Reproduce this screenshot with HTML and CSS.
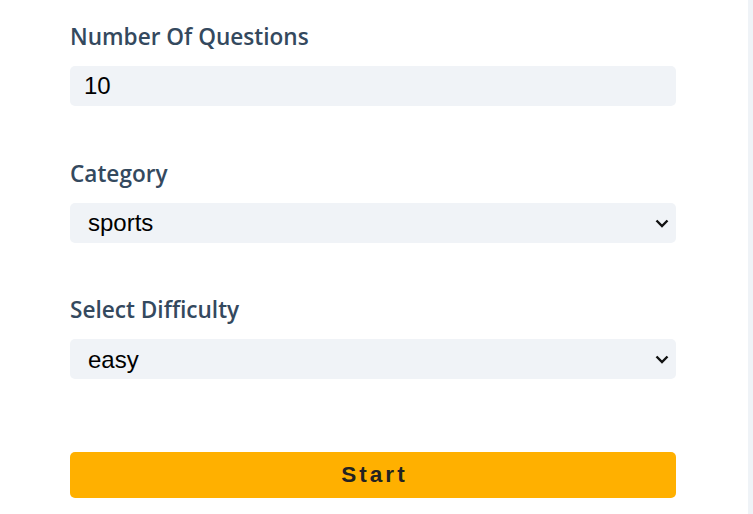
FILE: index.html
```html
<!DOCTYPE html>
<html lang="en">
<head>
<meta charset="utf-8">
<title>Quiz Setup</title>
<link rel="stylesheet" href="styles.css">
</head>
<body>
<div class="page">
  <main class="panel">
    <form class="form">
      <div class="group">
        <label class="label" for="num">Number Of Questions</label>
        <input class="field" id="num" type="number" value="10">
      </div>
      <div class="group">
        <label class="label" for="cat">Category</label>
        <div class="select-wrap">
          <select class="field select" id="cat">
            <option>sports</option>
          </select>
          <svg class="chev" width="14" height="9" viewBox="0 0 14 9"><path d="M1.5 1.5 L7 7 L12.5 1.5" fill="none" stroke="#111" stroke-width="2.4"/></svg>
        </div>
      </div>
      <div class="group">
        <label class="label" for="diff">Select Difficulty</label>
        <div class="select-wrap">
          <select class="field select" id="diff">
            <option>easy</option>
          </select>
          <svg class="chev" width="14" height="9" viewBox="0 0 14 9"><path d="M1.5 1.5 L7 7 L12.5 1.5" fill="none" stroke="#111" stroke-width="2.4"/></svg>
        </div>
      </div>
      <button class="start" type="button">Start</button>
    </form>
  </main>
  <div class="strip"></div>
</div>
</body>
</html>
```

FILE: styles.css
```css
* { box-sizing: border-box; }
html, body { margin: 0; padding: 0; height: 100%; }
body { background: #eff3f7; }
.page { display: flex; height: 514px; overflow: hidden; }
.panel { width: 748px; background: #ffffff; padding: 22px 0 0 70px; }
.strip { flex: 1; background: #eff3f7; }
.form { width: 606px; display: flex; flex-direction: column; }
.group { display: flex; flex-direction: column; margin-bottom: 52.5px; }
.label {
  font-family: "Open Sans", "Noto Sans", sans-serif;
  font-weight: 600;
  font-size: 22.6px;
  line-height: 30px;
  color: #34495e;
  margin-bottom: 14px;
}
.field {
  display: block;
  width: 606px;
  height: 40px;
  border: none;
  outline: none;
  border-radius: 5px;
  background: #f0f3f7;
  font-family: "Liberation Sans", Arial, sans-serif;
  font-size: 24px;
  color: #000;
  padding: 0 14px;
  margin: 0;
}
.field::-webkit-inner-spin-button, .field::-webkit-outer-spin-button { -webkit-appearance: none; margin: 0; }
.select-wrap { position: relative; }
.select { -webkit-appearance: none; appearance: none; padding-left: 18px; }
.chev { position: absolute; right: 7px; top: 16px; pointer-events: none; }
.start {
  margin-top: 20.5px;
  height: 46px;
  width: 606px;
  border: none;
  border-radius: 5px;
  background: #ffb000;
  font-family: "Liberation Sans", Arial, sans-serif;
  font-weight: 700;
  font-size: 22.5px;
  letter-spacing: 3px;
  color: #222;
  padding: 0 0 0 3px;
}
```
